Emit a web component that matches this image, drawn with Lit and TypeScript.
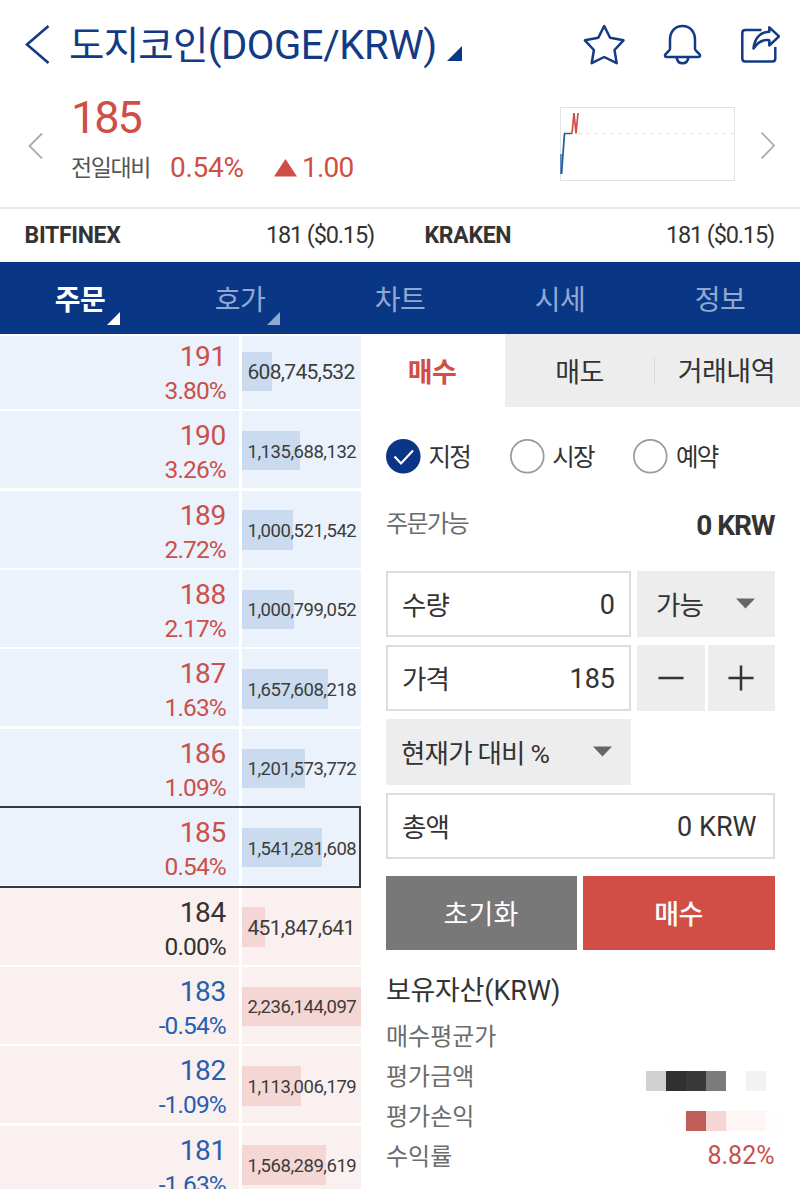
import { LitElement, html, css, svg } from "lit";
import { customElement } from "lit/decorators.js";
import { classMap } from "lit/directives/class-map.js";

interface Level {
  price: string;
  rate: string;
  volume: string;
  bar: number;
}

const LEVELS: Level[] = [
  { price: "191", rate: "3.80%", volume: "608,745,532", bar: 30 },
  { price: "190", rate: "3.26%", volume: "1,135,688,132", bar: 58 },
  { price: "189", rate: "2.72%", volume: "1,000,521,542", bar: 51 },
  { price: "188", rate: "2.17%", volume: "1,000,799,052", bar: 52 },
  { price: "187", rate: "1.63%", volume: "1,657,608,218", bar: 86 },
  { price: "186", rate: "1.09%", volume: "1,201,573,772", bar: 63 },
  { price: "185", rate: "0.54%", volume: "1,541,281,608", bar: 80.5 },
  { price: "184", rate: "0.00%", volume: "451,847,641", bar: 23 },
  { price: "183", rate: "-0.54%", volume: "2,236,144,097", bar: 119 },
  { price: "182", rate: "-1.09%", volume: "1,113,006,179", bar: 59 },
  { price: "181", rate: "-1.63%", volume: "1,568,289,619", bar: 84 },
];

const CURRENT = 185;
const PREVIOUS_CLOSE = 184;

@customElement("order-book")
class OrderBook extends LitElement {
  static styles = css`
    :host {
      display: block;
      width: 361px;
      height: 855.5px;
      overflow: hidden;
      border-top: 2px solid #fff;
      box-sizing: border-box;
    }
    .rows {
      margin-top: -3.7px;
    }
    .row {
      position: relative;
      display: grid;
      grid-template-columns: 239px 119.5px;
      column-gap: 2.5px;
      height: 77px;
      margin-bottom: 2.4px;
    }
    .cell {
      background: #ebf2fb;
    }
    .bid .cell {
      background: #fbf0f0;
    }
    .quote {
      display: flex;
      flex-direction: column;
      align-items: flex-end;
      padding: 7px 13px 0 0;
      color: #c9504b;
    }
    .flat .quote {
      color: #333;
    }
    .down .quote {
      color: #2560b0;
    }
    .price {
      font-size: 28px;
      line-height: 35px;
      letter-spacing: -0.3px;
    }
    .rate {
      font-size: 24.5px;
      line-height: 33px;
      letter-spacing: -0.9px;
      margin-right: 0.2px;
    }
    .volume {
      display: grid;
      align-items: center;
      padding-top: 2px;
    }
    .bar,
    .amount {
      grid-area: 1 / 1;
    }
    .bar {
      height: 39.5px;
      background: #cadbf0;
    }
    .bid .bar {
      background: #f4d6d5;
    }
    .amount {
      padding: 2px 0 0 6px;
      font-size: 21px;
      line-height: 30px;
      letter-spacing: -0.68px;
      white-space: nowrap;
      color: #3c3c3c;
    }
    .long {
      font-size: 18.5px;
      letter-spacing: -0.47px;
    }
    .current::after {
      content: "";
      position: absolute;
      z-index: 1;
      inset: -2px 0 -2.5px -2px;
      border: 2px solid #36393d;
    }
  `;

  render() {
    return html`<div class="rows">
      ${LEVELS.map((l) => {
        const p = Number(l.price);
        return html`<div
          class=${classMap({
            row: true,
            bid: p < CURRENT,
            current: p === CURRENT,
            flat: p === PREVIOUS_CLOSE,
            down: p < PREVIOUS_CLOSE,
          })}
        >
          <div class="cell quote">
            <span class="price">${l.price}</span>
            <span class="rate">${l.rate}</span>
          </div>
          <div class="cell volume">
            <div class="bar" style="width:${l.bar}px"></div>
            <div class=${classMap({ amount: true, long: l.volume.length > 11 })}>${l.volume}</div>
          </div>
        </div>`;
      })}
    </div>`;
  }
}

@customElement("order-form")
class OrderForm extends LitElement {
  static styles = css`
    :host {
      display: block;
      width: 439px;
      color: #333;
      font-size: 27px;
    }
    .tabs {
      display: grid;
      grid-template-columns: 144px 149px 146px;
      height: 73.5px;
      background: #ededed;
      line-height: 73px;
      text-align: center;
      letter-spacing: -0.5px;
    }
    .tab {
      padding-top: 3px;
      height: 70.5px;
    }
    .on {
      background: #fff;
      color: #d14e46;
      font-weight: 700;
      padding-right: 2px;
    }
    .history {
      display: flex;
      align-items: center;
      justify-content: space-between;
      padding-right: 25px;
    }
    .history-label {
      padding-top: 2px;
    }
    .rule {
      width: 1px;
      height: 27px;
      background: #d8d8d8;
      margin-bottom: 3px;
    }
    .body {
      padding: 30px 25px 0;
    }
    .radios {
      display: flex;
      height: 38px;
      align-items: center;
    }
    .radio {
      display: flex;
      align-items: center;
      width: 123.7px;
      gap: 7.5px;
      font-size: 24.5px;
      letter-spacing: -1.7px;
      white-space: nowrap;
    }
    .radio-label {
      padding-bottom: 1px;
    }
    .dot {
      width: 35px;
      height: 35px;
      flex: none;
    }
    .avail {
      display: flex;
      justify-content: space-between;
      align-items: center;
      margin-top: 31px;
      height: 40px;
    }
    .avail-label {
      color: #6c6c6c;
      font-size: 24px;
      letter-spacing: -1.6px;
      padding-bottom: 9px;
    }
    .avail-value {
      font-weight: 700;
      font-size: 28px;
      letter-spacing: -1px;
      margin-right: 0.5px;
      padding-bottom: 1px;
    }
    .fields {
      display: grid;
      grid-template-columns: 245px 68px 67.5px;
      grid-template-rows: repeat(4, 66px);
      row-gap: 8px;
      margin-top: 25.2px;
    }
    .box,
    .gray {
      display: flex;
      align-items: center;
      justify-content: space-between;
      box-sizing: border-box;
    }
    .box {
      border: 2px solid #dcdcdc;
      padding: 2px 14px 0;
      background: #fff;
    }
    .gray {
      background: #ededed;
      padding: 2px 19px 0 15px;
    }
    .k {
      letter-spacing: -0.8px;
      font-size: 26.5px;
      padding-bottom: 3px;
    }
    .unit {
      grid-column: 2 / 4;
      margin-left: 6px;
      padding-left: 19px;
      width: 138px;
      padding-right: 20px;
    }
    .minus {
      margin-left: 6px;
      width: 68px;
      justify-content: center;
      padding: 0;
    }
    .plus {
      margin-left: 8.5px;
      width: 67.5px;
      justify-content: center;
      padding: 0;
    }
    .ratio {
      grid-column: 1;
    }
    .total {
      grid-column: 1 / 4;
      width: 389px;
      padding-right: 16.5px;
    }
    .arrow {
      width: 19px;
      height: 11px;
      margin-bottom: 3px;
    }
    .sign {
      width: 26px;
      height: 26px;
    }
    .actions {
      display: grid;
      grid-template-columns: 191px 192px;
      gap: 6px;
      margin-top: 16.8px;
      line-height: 78px;
      height: 74.5px;
      color: #fff;
      text-align: center;
      letter-spacing: 0.2px;
    }
    .reset {
      background: #787878;
      height: 74.5px;
      padding-right: 1px;
    }
    .buy {
      background: #d14e46;
      font-weight: 500;
      letter-spacing: -0.6px;
      height: 74.5px;
      padding-right: 1px;
    }
    .assets {
      margin-top: 21px;
    }
    .heading {
      line-height: 40px;
      margin-bottom: 4.5px;
    }
    .heading-ko {
      letter-spacing: -0.3px;
    }
    .line {
      display: flex;
      align-items: center;
      justify-content: space-between;
      height: 40px;
    }
    .line-label {
      color: #6c6c6c;
      font-size: 24px;
      letter-spacing: 0;
      padding-bottom: 2px;
    }
    .profit {
      color: #c9504b;
      font-size: 25px;
      margin-right: 0.5px;
    }
    .mosaic {
      width: 140px;
      height: 20px;
      margin-right: -11px;
      margin-top: 9.5px;
    }
  `;

  private arrow() {
    return html`<svg class="arrow" viewBox="0 0 19 11"><path d="M0 .5h19L9.500 10.500z" fill="#666" /></svg>`;
  }

  private radio(label: string, checked: boolean) {
    return html`<div class="radio">
      <svg class="dot" viewBox="0 0 35 35">
        ${checked
          ? svg`<circle cx="17.300" cy="17.300" r="17.300" fill="#0b3586" /><path d="M8.500 17.500l6.500 7L27 11.500" fill="none" stroke="#fff" stroke-width="2.200" />`
          : svg`<circle cx="17.300" cy="17.300" r="16.400" fill="#fff" stroke="#9a9a9a" stroke-width="1.700" />`}
      </svg>
      <span class="radio-label">${label}</span>
    </div>`;
  }

  private mosaic(cells: [number, string][]) {
    return html`<svg class="mosaic" viewBox="0 0 140 20" shape-rendering="crispEdges">
      ${cells.map(([x, fill]) => svg`<rect x=${x} y="0" width="20" height="20" fill=${fill} />`)}
    </svg>`;
  }

  render() {
    return html`
      <div class="tabs">
        <div class="tab on">매수</div>
        <div class="tab">매도</div>
        <div class="tab history">
          <span class="rule"></span><span class="history-label">거래내역</span>
        </div>
      </div>
      <div class="body">
        <div class="radios">
          ${this.radio("지정", true)}${this.radio("시장", false)}${this.radio("예약", false)}
        </div>
        <div class="avail">
          <span class="avail-label">주문가능</span><span class="avail-value">0 KRW</span>
        </div>
        <div class="fields">
          <div class="box"><span class="k">수량</span><span>0</span></div>
          <div class="gray unit"><span class="k">가능</span>${this.arrow()}</div>
          <div class="box"><span class="k">가격</span><span>185</span></div>
          <div class="gray minus">
            <svg class="sign" viewBox="0 0 26 26"><path d="M.5 13h25" stroke="#333" stroke-width="2.500" /></svg>
          </div>
          <div class="gray plus">
            <svg class="sign" viewBox="0 0 26 26">
              <path d="M.5 13h25M13 .5v25" stroke="#333" stroke-width="2.500" />
            </svg>
          </div>
          <div class="gray ratio"><span class="k">현재가 대비 %</span>${this.arrow()}</div>
          <div class="box total"><span class="k">총액</span><span>0 KRW</span></div>
        </div>
        <div class="actions">
          <div class="reset">초기화</div>
          <div class="buy">매수</div>
        </div>
        <div class="assets">
          <div class="heading"><span class="heading-ko">보유자산</span>(KRW)</div>
          <div class="line"><span class="line-label">매수평균가</span></div>
          <div class="line">
            <span class="line-label">평가금액</span>
            ${this.mosaic([
              [0, "#d1d1d1"],
              [20, "#303030"],
              [40, "#393939"],
              [60, "#7b7b7b"],
              [100, "#f2f2f2"],
            ])}
          </div>
          <div class="line">
            <span class="line-label">평가손익</span>
            ${this.mosaic([
              [20, "#fffdfd"],
              [40, "#bf5d58"],
              [60, "#f6d6d5"],
              [80, "#fef5f4"],
              [100, "#fef5f4"],
              [120, "#fffdfd"],
            ])}
          </div>
          <div class="line"><span class="line-label">수익률</span><span class="profit">8.82%</span></div>
        </div>
      </div>
    `;
  }
}

@customElement("app-root")
class AppRoot extends LitElement {
  static styles = css`
    :host {
      display: block;
      width: 800px;
      height: 1189px;
      overflow: hidden;
      background: #fff;
      color: #333;
      font-family: Roboto, "Noto Sans CJK KR", sans-serif;
    }
    .top {
      display: flex;
      align-items: center;
      height: 90px;
      color: #123a85;
      padding: 0 20px 0 25px;
    }
    .back {
      width: 25px;
      height: 40px;
      margin-right: 19px;
    }
    .title {
      font-size: 40px;
      line-height: 50px;
      letter-spacing: -0.4px;
      white-space: nowrap;
      padding-top: 2px;
    }
    .name {
      font-size: 38.5px;
      letter-spacing: -0.75px;
    }
    .corner {
      width: 15px;
      height: 15px;
      margin: 16px auto 0 10px;
    }
    .icons {
      display: flex;
      gap: 34.5px;
    }
    .icon {
      width: 42px;
      height: 42px;
      fill: none;
      stroke: #123a85;
      stroke-width: 2.5;
      stroke-linejoin: round;
    }
    .star {
      margin-right: 2px;
    }
    .summary {
      display: flex;
      height: 119px;
      box-sizing: border-box;
      border-bottom: 2px solid #ebebeb;
      padding: 2px 25px 0 28px;
    }
    .chevron {
      width: 15px;
      height: 28px;
      fill: none;
      stroke: #aaa;
      stroke-width: 1.8;
      margin-top: 39px;
    }
    .figures {
      margin-left: 28px;
      color: #cf4f47;
      flex: 1;
    }
    .last {
      font-size: 45px;
      line-height: 51px;
      letter-spacing: -2px;
    }
    .change {
      display: flex;
      align-items: center;
      height: 48px;
      font-size: 28px;
      letter-spacing: -0.3px;
    }
    .versus {
      color: #555;
      font-size: 23px;
      letter-spacing: -1.4px;
      width: 99px;
      padding-bottom: 3px;
    }
    .pct {
      width: 104px;
    }
    .up {
      width: 23px;
      height: 18px;
      margin: 1px 5px 0 0;
    }
    .delta {
      letter-spacing: -0.8px;
    }
    .spark {
      width: 177px;
      height: 76px;
      margin: 13.5px 24px 0 0;
    }
    .markets {
      display: grid;
      grid-template-columns: 400px 400px;
      height: 53px;
    }
    .market {
      display: flex;
      justify-content: space-between;
      align-items: center;
      padding: 0 26px 1px 24.500px;
      font-size: 23.5px;
      letter-spacing: -1.15px;
    }
    .exchange {
      font-weight: 700;
      font-size: 23px;
      letter-spacing: -0.3px;
    }
    .nav {
      display: grid;
      grid-template-columns: repeat(5, 160px);
      height: 71.5px;
      background: #0a3686;
      color: #93a8d0;
      font-size: 28px;
      letter-spacing: -0.6px;
    }
    .item {
      position: relative;
      text-align: center;
      line-height: 78px;
      height: 71.5px;
    }
    .active {
      color: #fff;
      font-weight: 700;
    }
    .mark {
      position: absolute;
      left: 106.500px;
      top: 49.500px;
      width: 13px;
      height: 13px;
    }
    .trade {
      display: flex;
    }
  `;

  private navItem(label: string, active: boolean, mark: boolean) {
    return html`<div class=${classMap({ item: true, active })}>
      ${label}${mark
        ? html`<svg class="mark" viewBox="0 0 13 13"><path d="M13 0v13H0z" fill="currentColor" /></svg>`
        : null}
    </div>`;
  }

  render() {
    return html`
      <div class="top">
        <svg class="back" viewBox="0 0 25 40">
          <path d="M23.500 1L2 19.500 23.500 38" fill="none" stroke="#123a85" stroke-width="2.600" />
        </svg>
        <div class="title"><span class="name">도지코인</span>(DOGE/KRW)</div>
        <svg class="corner" viewBox="0 0 15 15"><path d="M15 0v15H0z" fill="#0b3586" /></svg>
        <div class="icons">
          <svg class="icon star" viewBox="0 0 42 42">
            <path
              d="M21.200 2l5.900 11.800 13.400 2.500-9 9.700 2.200 13.200-12.500-6.200-12.500 6.200 2.200-13.200-9-9.700 13.400-2.500z"
            />
          </svg>
          <svg class="icon" viewBox="0 0 42 42">
            <path
              d="M8 16C8 7 13.500 2 20.500 2S33 7 33 16v9c0 2 5 4.500 5 6.500q0 1.500-1.800 1.500H4.800Q3 33 3 31.500C3 29.500 8 27 8 25zM14.500 33c.5 4.200 3 6.300 6 6.300s5.500-2.100 6-6.300"
            />
          </svg>
          <svg class="icon" viewBox="0 0 42 42">
            <path
              d="M23.500 6H7.300Q4.300 6 4.300 9v25.500q0 3 3 3h27q3 0 3-3V23M15.500 24.500C16.500 15 21.500 8 31.300 7.700V3.300L41 12.300 31.300 21.500V16.300C25 15.300 19.500 18.500 15.500 24.500z"
            />
          </svg>
        </div>
      </div>
      <div class="summary">
        <svg class="chevron" viewBox="0 0 15 28"><path d="M14 2.500L1.500 15 14 27.500" /></svg>
        <div class="figures">
          <div class="last">185</div>
          <div class="change">
            <span class="versus">전일대비</span><span class="pct">0.54%</span>
            <svg class="up" viewBox="0 0 23 18"><path d="M11.500 0L23 17.500H0z" fill="#cf4f47" /></svg>
            <span class="delta">1.00</span>
          </div>
        </div>
        <svg class="spark" viewBox="0 0 177 76" fill="none">
          <rect x="1.500" y="1.500" width="174" height="73" stroke="#e2e2e2" />
          <path d="M19 27.500h156" stroke="#e6e6e6" stroke-dasharray="4 4" />
          <path d="M2.500 68L5.500 27.500" stroke="#1f62a8" stroke-width="1.800" />
          <path d="M2 48v20" stroke="#1f62a8" stroke-width="1.300" />
          <path d="M5 27.500h8" stroke="#555" stroke-width="1.500" />
          <path d="M13 27.500L15 7l2 20.500L19 7" stroke="#cf4f47" stroke-width="1.700" />
        </svg>
        <svg class="chevron" viewBox="0 0 15 28"><path d="M1.500 1.500L14 14.500 1.500 27.500" /></svg>
      </div>
      <div class="markets">
        <div class="market"><span class="exchange">BITFINEX</span><span>181 ($0.15)</span></div>
        <div class="market"><span class="exchange">KRAKEN</span><span>181 ($0.15)</span></div>
      </div>
      <div class="nav">
        ${this.navItem("주문", true, true)} ${this.navItem("호가", false, true)}
        ${this.navItem("차트", false, false)} ${this.navItem("시세", false, false)}
        ${this.navItem("정보", false, false)}
      </div>
      <div class="trade">
        <order-book></order-book>
        <order-form></order-form>
      </div>
    `;
  }
}
